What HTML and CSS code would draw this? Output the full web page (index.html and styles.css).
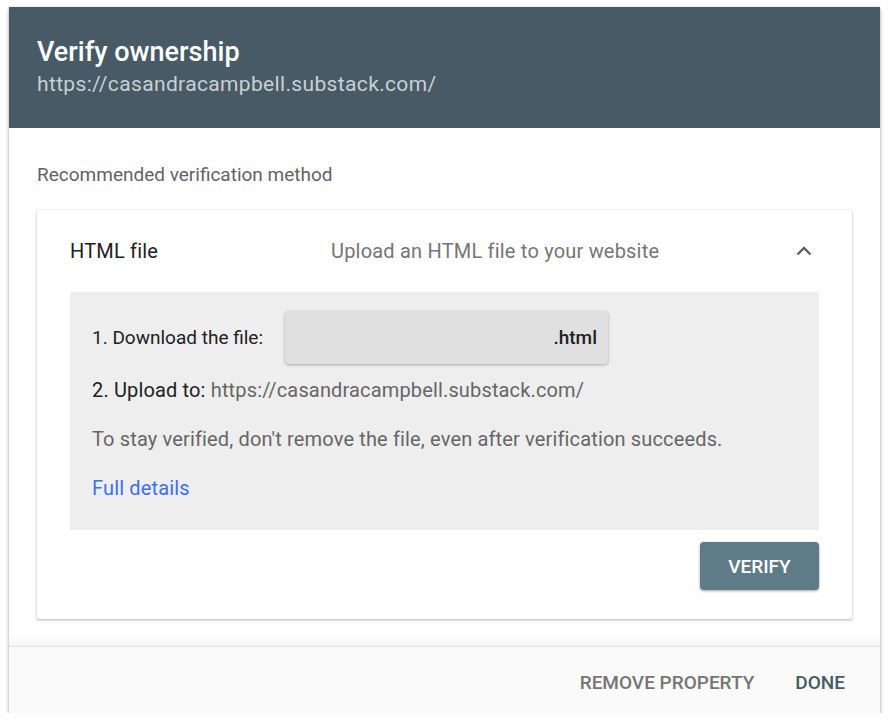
FILE: index.html
```html
<!DOCTYPE html>
<html lang="en">
<head>
    <meta charset="UTF-8">
    <title>Verify ownership</title>
    <link rel="stylesheet" href="styles.css">
</head>
<body>
    <div class="dialog">
        <div class="dialog-header">
            <h1>Verify ownership</h1>
            <div class="property-url">https://casandracampbell.substack.com/</div>
        </div>
        <div class="dialog-content">
            <div class="section-label">Recommended verification method</div>
            <div class="method-card">
                <div class="method-head">
                    <div class="method-name">HTML file</div>
                    <div class="method-desc">Upload an HTML file to your website</div>
                    <svg class="chevron" width="18" height="18" viewBox="0 0 18 18">
                        <path d="M2.5 12.5 L9 6 L15.5 12.5" fill="none" stroke="#616161" stroke-width="2.4"/>
                    </svg>
                </div>
                <div class="method-body">
                    <div class="step step-download">
                        <span>1. Download the file:</span>
                        <button class="file-button">.html</button>
                    </div>
                    <div class="step">2. Upload to: <span class="muted">https://casandracampbell.substack.com/</span></div>
                    <div class="step muted">To stay verified, don't remove the file, even after verification succeeds.</div>
                    <div class="step"><a href="#" class="link">Full details</a></div>
                </div>
                <div class="card-actions">
                    <button class="verify-button">VERIFY</button>
                </div>
            </div>
        </div>
        <div class="dialog-footer">
            <button class="text-button grey">REMOVE PROPERTY</button>
            <button class="text-button dark">DONE</button>
        </div>
    </div>
</body>
</html>
```

FILE: styles.css
```css
body {
    margin: 0;
    padding: 0;
    background: white;
    font-family: Roboto, "Liberation Sans", sans-serif;
}
.dialog {
    margin: 7px 0 0 9px;
    width: 871px;
    background: white;
    box-shadow: 0 2px 4px rgba(0, 0, 0, 0.3), 0 0 2px rgba(0, 0, 0, 0.15);
}
.dialog-header {
    background: #475a65;
    height: 121px;
    box-sizing: border-box;
    padding: 29px 28px 0 28px;
}
.dialog-header h1 {
    margin: 0;
    color: white;
    font-size: 27px;
    font-weight: 500;
    line-height: 32px;
}
.property-url {
    color: rgba(255, 255, 255, 0.72);
    font-size: 21px;
    line-height: 26px;
    letter-spacing: 0.35px;
    margin-top: 3px;
}
.dialog-content {
    padding: 34px 28px 27px 28px;
    position: relative;
}
.dialog-content::after {
    content: "";
    position: absolute;
    left: 0;
    right: 0;
    bottom: 0;
    height: 12px;
    background: linear-gradient(rgba(0, 0, 0, 0), rgba(0, 0, 0, 0.04));
}
.section-label {
    color: #5f6368;
    font-size: 19px;
    line-height: 26px;
}
.method-card {
    margin-top: 22px;
    background: white;
    border-radius: 2px;
    box-shadow: 0 1px 3px rgba(0, 0, 0, 0.3), 0 0 1px rgba(0, 0, 0, 0.15);
    padding: 0 33px 29px 33px;
}
.method-head {
    display: flex;
    align-items: center;
    height: 82px;
}
.method-name {
    width: 261px;
    font-size: 20px;
    letter-spacing: 0.18px;
    color: #212121;
}
.method-desc {
    flex: 1;
    font-size: 20px;
    letter-spacing: 0.2px;
    color: #757575;
}
.chevron {
    margin-right: 6px;
}
.method-body {
    background: #eeeeee;
    padding: 19px 22px 29px 22px;
}
.step {
    font-size: 20px;
    letter-spacing: 0.15px;
    color: #212121;
    line-height: 26px;
    margin-top: 23px;
}
.step-download {
    display: flex;
    align-items: center;
    margin-top: 0;
    margin-bottom: -10px;
    font-size: 19px;
    letter-spacing: 0;
}
.step-download span {
    width: 193px;
}
.file-button {
    width: 323px;
    height: 53px;
    border: none;
    border-radius: 4px;
    background: #e0e0e0;
    box-shadow: 0 1px 3px rgba(0, 0, 0, 0.3);
    font-family: Roboto, "Liberation Sans", sans-serif;
    font-size: 19px;
    font-weight: 500;
    color: #212121;
    text-align: right;
    padding: 0 11px;
}
.muted {
    color: #666666;
}
.link {
    color: #3b6ef5;
    text-decoration: none;
}
.card-actions {
    display: flex;
    justify-content: flex-end;
    margin-top: 12px;
}
.verify-button {
    width: 119px;
    height: 48px;
    border: none;
    border-radius: 4px;
    background: #607b88;
    color: white;
    font-family: Roboto, "Liberation Sans", sans-serif;
    font-size: 19px;
    font-weight: 500;
    box-shadow: 0 1px 3px rgba(0, 0, 0, 0.35);
}
.dialog-footer {
    background: #fafafa;
    border-top: 1px solid #e0e0e0;
    height: 67px;
    box-sizing: border-box;
    padding-top: 5px;
    display: flex;
    justify-content: flex-end;
    align-items: center;
    padding-right: 35px;
    gap: 41px;
}
.text-button {
    border: none;
    background: none;
    padding: 0;
    font-family: Roboto, "Liberation Sans", sans-serif;
    font-size: 19px;
    font-weight: 500;
}
.grey {
    color: #757575;
}
.dark {
    color: #455a64;
}
```
